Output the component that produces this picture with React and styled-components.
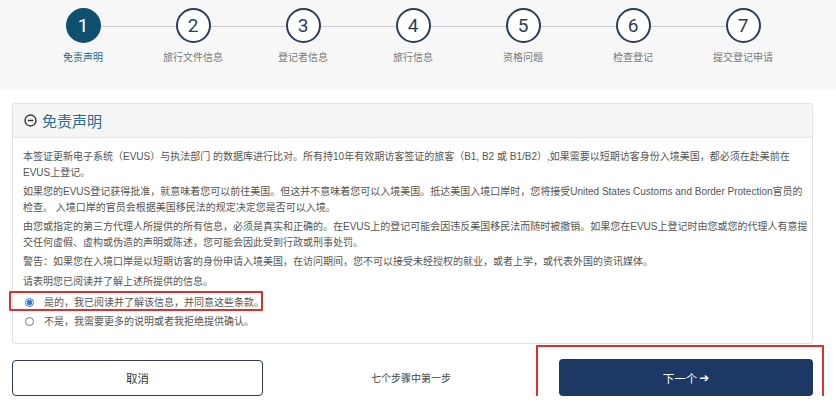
import React from 'react'
import styled, { createGlobalStyle } from 'styled-components';

const steps = ["免责声明", "旅行文件信息", "登记者信息", "旅行信息", "资格问题", "检查登记", "提交登记申请"];

export default function App() {
  const [agree, setAgree] = React.useState("yes");
  return (
    <>
      <GlobalStyle />
      <Top>
        <Stepper>
          <StepLine />
          {steps.map((label, i) => (
            <Step key={label}>
              <Circle active={i === 0}>{i + 1}</Circle>
              <StepLabel active={i === 0}>{label}</StepLabel>
            </Step>
          ))}
        </Stepper>
      </Top>
      <Page>
        <Panel>
          <PanelHeader>
            <svg width="13" height="13" viewBox="0 0 14 14">
              <circle cx="7" cy="7" r="5.9" fill="none" stroke="#333" strokeWidth="1.5" />
              <line x1="4" y1="7" x2="10" y2="7" stroke="#333" strokeWidth="1.6" />
            </svg>
            免责声明
          </PanelHeader>
          <PanelBody>
            <Para>
              本签证更新电子系统（EVUS）与执法部门 的数据库进行比对。所有持10年有效期访客签证的旅客（B1, B2 或 B1/B2）,如果需要以短期访客身份入境美国，都必须在赴美前在<br />
              EVUS上登记。
            </Para>
            <Para>
              如果您的EVUS登记获得批准，就意味着您可以前往美国。但这并不意味着您可以入境美国。抵达美国入境口岸时，您将接受United States Customs and Border Protection官员的<br />
              检查。 入境口岸的官员会根据美国移民法的规定决定您是否可以入境。
            </Para>
            <Para>
              由您或指定的第三方代理人所提供的所有信息，必须是真实和正确的。在EVUS上的登记可能会因违反美国移民法而随时被撤销。如果您在EVUS上登记时由您或您的代理人有意提<br />
              交任何虚假、虚构或伪造的声明或陈述，您可能会因此受到行政或刑事处罚。
            </Para>
            <Para>警告：如果您在入境口岸是以短期访客的身份申请入境美国，在访问期间，您不可以接受未经授权的就业，或者上学，或代表外国的资讯媒体。</Para>
            <Para>请表明您已阅读并了解上述所提供的信息。</Para>
            <RadioRow marked>
              <Radio type="radio" name="agree" checked={agree === "yes"} onChange={() => setAgree("yes")} />
              是的，我已阅读并了解该信息，并同意这些条款。
            </RadioRow>
            <RadioRow>
              <Radio type="radio" name="agree" checked={agree === "no"} onChange={() => setAgree("no")} />
              不是，我需要更多的说明或者我拒绝提供确认。
            </RadioRow>
          </PanelBody>
        </Panel>
        <Actions>
          <CancelButton>取消</CancelButton>
          <StepCount>七个步骤中第一步</StepCount>
          <NextWrap>
            <NextButton>下一个<Arrow>➜</Arrow></NextButton>
          </NextWrap>
        </Actions>
      </Page>
    </>
  );
}

const GlobalStyle = createGlobalStyle`
  body {
    margin: 0;
    background: #ffffff;
    font-family: "Liberation Sans", "Noto Sans CJK SC", sans-serif;
    color: #555;
  }
`;

const Top = styled.div`
  background: #f7f7f7;
  height: 90px;
`;

const Stepper = styled.div`
  position: relative;
  display: grid;
  grid-template-columns: repeat(7, 110px);
  padding: 8px 0 0 28px;
`;

const StepLine = styled.div`
  position: absolute;
  left: 83px;
  width: 660px;
  top: 26px;
  height: 1px;
  background: #c9cdd2;
`;

const Step = styled.div`
  display: flex;
  flex-direction: column;
  align-items: center;
  position: relative;
`;

const Circle = styled.div`
  width: 35px;
  height: 35px;
  box-sizing: border-box;
  border-radius: 50%;
  border: 2px solid ${p => (p.active ? "#10506f" : "#2c3d5b")};
  background: ${p => (p.active ? "#10506f" : "#ffffff")};
  color: ${p => (p.active ? "#ffffff" : "#2c3d5b")};
  display: flex;
  align-items: center;
  justify-content: center;
  font-family: Roboto, "Liberation Sans", sans-serif;
  font-size: 19px;
`;

const StepLabel = styled.div`
  margin-top: 6px;
  font-size: 10px;
  color: ${p => (p.active ? "#1d6a8c" : "#7a7a7a")};
`;

const Page = styled.div`
  padding: 13px 23px 0 12px;
`;

const Panel = styled.div`
  border: 1px solid #e1e1e1;
  border-radius: 3px;
`;

const PanelHeader = styled.div`
  height: 33px;
  background: #f5f5f5;
  border-bottom: 1px solid #e6e6e6;
  display: flex;
  align-items: center;
  gap: 5px;
  padding-left: 11px;
  font-size: 15px;
  color: #2b6d8f;
`;

const PanelBody = styled.div`
  padding: 11px 10px 12px 10px;
  font-size: 10px;
  line-height: 15.5px;
  color: #555;
`;

const Para = styled.p`
  margin: 0 0 4px 0;
  white-space: nowrap;
`;

const RadioRow = styled.label`
  position: relative;
  display: flex;
  align-items: center;
  height: 19px;
  margin-top: ${p => (p.marked ? "4px" : "0")};
  white-space: nowrap;
  &::after {
    content: "";
    display: ${p => (p.marked ? "block" : "none")};
    position: absolute;
    left: -14px;
    top: -2px;
    width: 250px;
    height: 16px;
    border: 2px solid #e0302d;
    border-radius: 1px;
  }
`;

const Radio = styled.input`
  width: 9px;
  height: 9px;
  margin: 0 10px 0 2px;
  accent-color: #3a7bbf;
`;

const Actions = styled.div`
  display: grid;
  grid-template-columns: 251px 1fr 254px;
  align-items: center;
  margin-top: 15px;
`;

const CancelButton = styled.button`
  height: 36px;
  background: #ffffff;
  border: 1.5px solid #2a3b58;
  border-radius: 4px;
  font-family: "Liberation Sans", "Noto Sans CJK SC", sans-serif;
  font-size: 11.5px;
  color: #333;
`;

const StepCount = styled.div`
  text-align: center;
  font-size: 10px;
  color: #444;
`;

const NextWrap = styled.div`
  position: relative;
  &::after {
    content: "";
    position: absolute;
    left: -23px;
    right: -11px;
    top: -14px;
    bottom: -11px;
    border: 2px solid #e0302d;
  }
`;

const NextButton = styled.button`
  width: 100%;
  height: 37px;
  background: #1d3864;
  border: none;
  border-radius: 4px;
  color: #ffffff;
  font-family: "Liberation Sans", "Noto Sans CJK SC", sans-serif;
  font-size: 11.5px;
  display: flex;
  align-items: center;
  justify-content: center;
`;

const Arrow = styled.span`
  font-family: "DejaVu Sans", sans-serif;
  font-size: 12px;
  margin-left: 2px;
`;
